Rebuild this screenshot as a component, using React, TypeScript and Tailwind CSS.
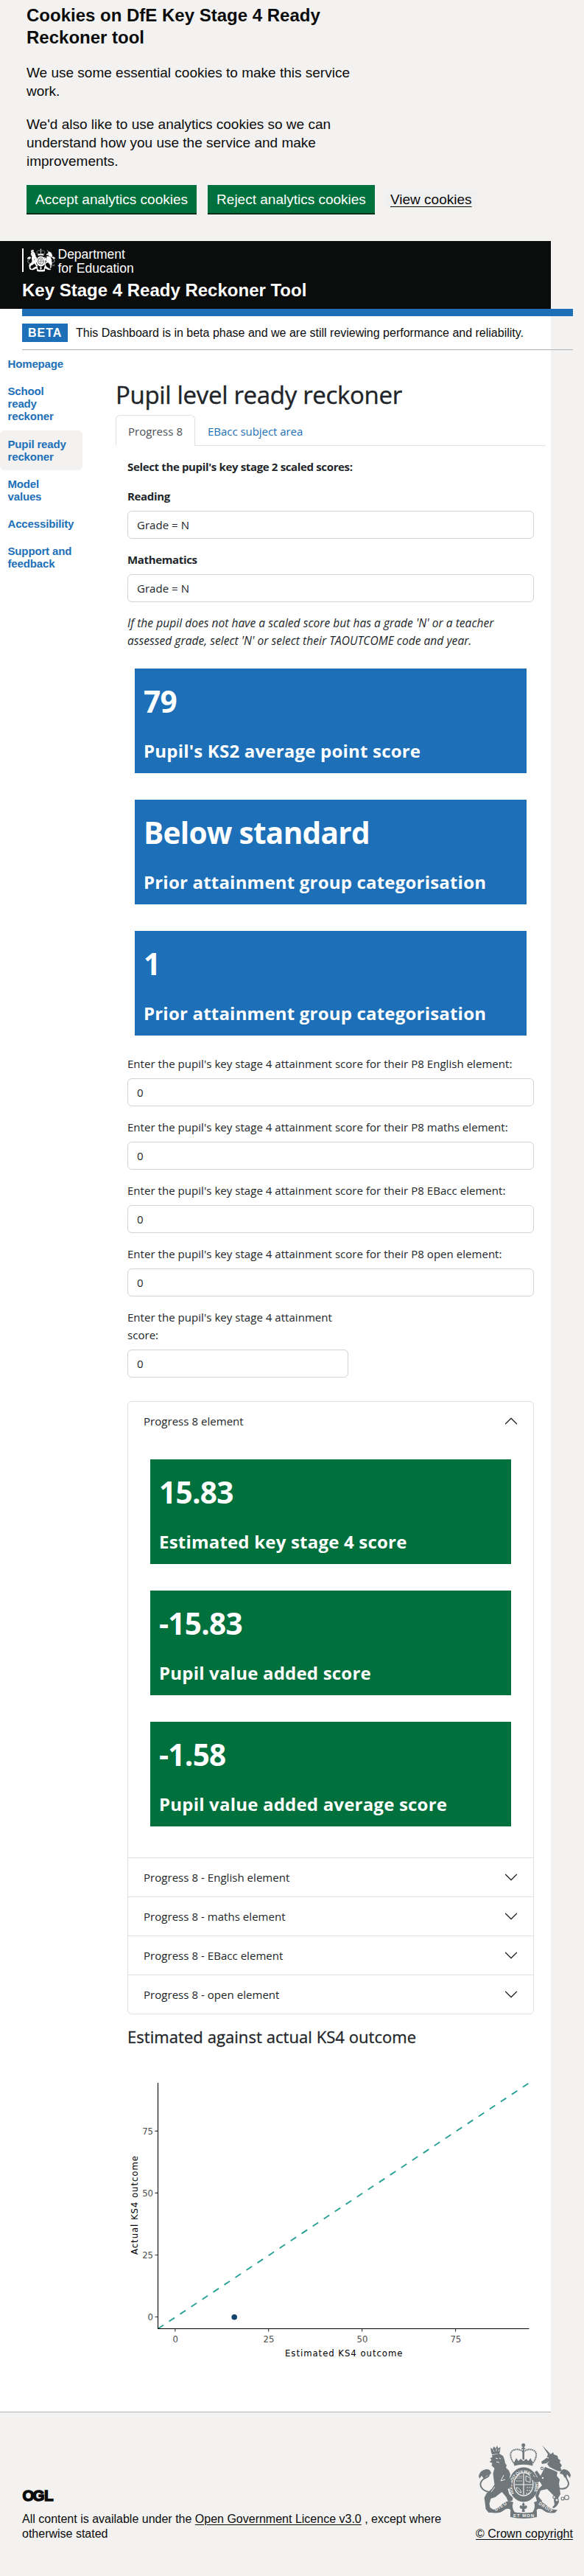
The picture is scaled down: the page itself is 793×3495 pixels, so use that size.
import React from "react";

const SEGOE = "font-['Open_Sans','Noto_Sans',sans-serif]";
const ARIAL = "font-['Liberation_Sans',Arial,sans-serif] tracking-normal";

function Crest({ className, motto = false }: { className: string; motto?: boolean }) {
  const cut = motto ? "#f3f2f1" : "#0b0c0c";
  return (
    <svg viewBox="0 0 125 102" className={className} fill="currentColor" aria-hidden="true">
      {/* crown */}
      <circle cx="60.7" cy="2.6" r="2.5" />
      <path d="M59.7 4h2v6h-2zM58 6.2h5.4v1.6H58z" />
      <path
        d="M48 27C43 21 41.500 13 46 10c5-3 11-2 14.700 2C64.400 8 70.400 7 75.400 10c4.500 3 3 11-2 17"
        fill="none"
        stroke="currentColor"
        strokeWidth="2"
        strokeDasharray="1.800 .7"
      />
      <path d="M60.700 10v12" stroke="currentColor" strokeWidth="2.600" />
      <path d="M48 26l3-6 3 4 3-3 3.700 3 3.700-3 3 3 3-4 3 6v4.500q-12-3.500-25.400 0z" />
      {/* garter and shield */}
      <ellipse cx="61" cy="56" rx="20" ry="23.500" />
      <ellipse cx="61" cy="55.500" rx="13.600" ry="16.300" fill={cut} />
      <ellipse cx="61" cy="55.500" rx="12.300" ry="15" />
      <path d="M61 41v29M49 56h24" stroke={cut} strokeWidth="1.200" />
      <path d="M51 47h8M51 51h8M52 44.500h7M65 60h7M65 64h6M64 68h4" stroke={cut} strokeWidth=".9" strokeDasharray="2 .8" />
      <path d="M64 44l6 3v6l-6-2zM51 60q5 0 7 7l-3-1q-4-2-4-6z" fill="none" stroke={cut} strokeWidth=".9" />
      {motto && (
        <>
          <path id="garter-path" d="M48 68A15.500 18 0 1 1 74 68" fill="none" />
          <text fontSize="5.600" fontWeight="700" fill={cut} fontFamily="Liberation Sans, sans-serif">
            <textPath href="#garter-path" textLength="70">HONI SOIT QUI MAL Y PENSE</textPath>
          </text>
        </>
      )}
      {/* lion */}
      <path d="M17 12l-1-6 3 2 1.500-4 2.500 3 2-4 1.500 4 3-2-.5 6-1 3-10 1z" />
      <path d="M19.500 8.500l1.500 3M24 7v4M28 8l-1 3" stroke={cut} strokeWidth=".8" />
      <path d="M18 16l10-2 5 3 2 5 1 5 2 3-1 3 4 4 2 5-1 4 2 5 .5 8-5 3 2 7 5 5-1 4h-6l-2-5-6-7-4 3-5 4-6 2-2 7 1 5 6 4-1 3h-7l-4-5-1-9-1-6 3-6 7-6 4-6-1-7-1-8 2-7-4-4 1-3-4-2 3-2-2-3 3-1z" />
      <path d="M23 20l3 1M28 20l2 1M24 25l4 1M34 43l-4 8 6-2M22 59l-5 7" stroke={cut} strokeWidth="1" fill="none" />
      <path d="M14 66C4 64 0 57 4 51c3-5 11-4 10-10" fill="none" stroke="currentColor" strokeWidth="2" />
      <path d="M0 44q2-8 11-9 5 0 6 6l-6 3-4 4-3-4-3 4z" />
      {/* unicorn */}
      <path d="M86 2.500L97 14l-2.500 1.500z" />
      <path d="M94 15l5-1 2-2 1 3 5 2 1 4 3 2-1 3 3 4-2 3 2 4-3 1-4-1-10 -5-3-4 3-4-4 3-6 1-1-3 7-5z" />
      <path d="M92 19l3 1M91 33q8 5 16 5" stroke={cut} strokeWidth="1.200" />
      <path d="M90 32l17 7-1 5 4 5-1 6 1 6 1 8-3 5 1 6-3 5-4 3-2-1 3-4-1-6 1-5-6-6-4-4-9 2-3 8 5 6-1 4h-5l-1-4-2-7 4-9 5-5-3-5-6 1-5-4-3-7 3-1 4 6 4-1-4-7 3-2 5 7z" />
      <path d="M108 61c9 2 14-1 14-7 0-4-6-7-3-13" fill="none" stroke="currentColor" strokeWidth="2" />
      <path d="M125 43q-2-7-9-8-5 1-6 6l4 1 3 5 3-5 4 5z" />
      <g fill={cut} stroke="currentColor" strokeWidth="1.100">
        <circle cx="102.500" cy="73" r="1.800" />
        <circle cx="106" cy="77" r="2" />
        <circle cx="114" cy="75" r="2" />
        <circle cx="119.500" cy="73.500" r="3" />
        <circle cx="86" cy="34" r="1.600" />
        <circle cx="87" cy="47" r="1.800" />
      </g>
      {/* ribbon */}
      <path d="M15 90q8 1 14-5 6-6 13-7l5 2q-2 5 0 10l2 4-3 2-4-7q-5-1-8 2-6 5-16 3z" />
      <path d="M107 90q-8 1-14-5-6-6-13-7l-5 2q2 5 0 10l-2 4 3 2 4-7q5-1 8 2 6 5 16 3z" />
      <path d="M43 92q18 5 36 0v8q-18 4-36 0z" />
      <path d="M60.700 80l2 3-1 2q4-2 4 1 0 3-3.500 3l.5 4h-4l.5-4q-3.500 0-3.500-3 0-3 4-1l-1-2z" />
      {motto && (
        <g fill={cut} fontSize="6" fontWeight="700" fontFamily="Liberation Sans, sans-serif">
          <text x="47" y="99.500" textLength="28">ET MON</text>
          <text transform="translate(23 92) rotate(-31)" textLength="18">DIEU</text>
          <text transform="translate(81 82.500) rotate(34)" textLength="21">DROIT</text>
        </g>
      )}
    </svg>
  );
}

function Field({ label, value, bold = false }: { label: string; value: string; bold?: boolean }) {
  return (
    <div className="mb-[15px]">
      <div className={bold ? "h-6 leading-[26px] font-bold tracking-[-0.35px]" : "h-6 leading-[26px]"}>{label}</div>
      <Input value={value} />
    </div>
  );
}

function Input({ value }: { value: string }) {
  return (
    <div className="mt-[9px] h-[38px] rounded-md border border-[#ced4da] bg-white px-3 leading-[37px]">{value}</div>
  );
}

function ValueBox({ value, label, green = false }: { value: string; label: string; green?: boolean }) {
  return (
    <div className={`h-[142px] px-3 pt-[15px] font-bold text-white ${green ? "bg-[#00703c]" : "bg-[#1d70b8]"}`}>
      <div className="h-[60px] text-[40.5px] leading-[60px] tracking-[-0.7px]">{value}</div>
      <div className="mt-[19px] h-9 whitespace-nowrap text-[24px] leading-[36px] tracking-[0.2px]">{label}</div>
    </div>
  );
}

function Chevron({ up = false }: { up?: boolean }) {
  return (
    <svg viewBox="0 0 16 16" className={up ? "h-5 w-5 rotate-180" : "h-5 w-5"} fill="#212529">
      <path
        fillRule="evenodd"
        d="M1.646 4.646a.5.5 0 0 1 .708 0L8 10.293l5.646-5.647a.5.5 0 0 1 .708.708l-6 6a.5.5 0 0 1-.708 0l-6-6a.5.5 0 0 1 0-.708z"
      />
    </svg>
  );
}

function AccordionHeader({ title, open = false }: { title: string; open?: boolean }) {
  return (
    <div>
      <div className="flex h-[52px] items-center justify-between pr-5 pl-[21px]">
        <span>{title}</span>
        <Chevron up={open} />
      </div>
    </div>
  );
}

function Chart() {
  const ticks = [0, 25, 50, 75];
  const x = (v: number) => 64.800 + v * 5.077;
  const y = (v: number) => 343.500 - v * 3.362;
  return (
    <svg width="552" height="440" viewBox="0 0 552 440" className="tracking-normal" fontFamily="DejaVu Sans, sans-serif" fontSize="11.700">
      <line x1="41.500" y1="359.500" x2="545.500" y2="26" stroke="#28a197" strokeWidth="1.900" strokeDasharray="9 9" />
      <path d="M41.500 26v334M41 359.500h504.500" stroke="#000" strokeWidth="1.070" fill="none" />
      {ticks.map((t) => (
        <g key={t}>
          <path d={`M${x(t)} 360v3.500M41 ${y(t)}h-3.500`} stroke="#333" strokeWidth="1.070" />
          <text x={x(t) + 0.3} y="378" textAnchor="middle" fill="#4d4d4d">{t}</text>
          <text x="35" y={y(t) + 4.5} textAnchor="end" fill="#4d4d4d">{t}</text>
        </g>
      ))}
      <circle cx="145.200" cy="343.700" r="3.800" fill="#12436d" />
      <text x="214" y="397" textLength="159.500" fill="#000">Estimated KS4 outcome</text>
      <text transform="translate(13.500 259) rotate(-90)" textLength="134" fill="#000">Actual KS4 outcome</text>
    </svg>
  );
}

const nav = [["Homepage"], ["School", "ready", "reckoner"], ["Pupil ready", "reckoner"], ["Model", "values"], ["Accessibility"], ["Support and", "feedback"]];

export default function App() {
  return (
    <div className={`min-h-[3495px] bg-[#f3f2f1] text-[15px] tracking-[0.04px] text-[#212529] ${SEGOE}`}>
      <section className={`h-[327px] px-9 pt-1.5 text-[19px] leading-[25px] text-[#0b0c0c] ${ARIAL}`}>
        <h2 className="mb-5 w-[480px] text-[24px] leading-[30px] font-bold">Cookies on DfE Key Stage 4 Ready Reckoner tool</h2>
        <p className="mb-5 w-[480px]">We use some essential cookies to make this service work.</p>
        <p className="w-[480px]">We'd also like to use analytics cookies so we can understand how you use the service and make improvements.</p>
        <div className="mt-5 flex items-start gap-[15px] whitespace-nowrap">
          <button className="h-10 w-[231px] border-b-2 border-[#002d18] bg-[#00703c] pt-[1px] leading-[37px] text-white">Accept analytics cookies</button>
          <button className="h-10 w-[227px] border-b-2 border-[#002d18] bg-[#00703c] pt-[1px] leading-[37px] text-white">Reject analytics cookies</button>
          <button className="mt-[9px] h-[21px] bg-[#f0f0f0] px-1.5 leading-[21px] underline underline-offset-[3px]">View cookies</button>
        </div>
      </section>

      <div className="w-[748px] bg-white">
        <header className={`h-[92px] bg-[#0b0c0c] px-[30px] pt-[10px] text-white ${ARIAL}`}>
          <div className="flex h-8 items-start">
            <div className="h-8 w-[2px] bg-white" />
            <Crest className="ml-[5px] h-8 w-[38px]" />
            <div className="-mt-px ml-[3.5px] text-[17.5px] leading-[18.700px]">
              <div>Department</div>
              <div>for Education</div>
            </div>
          </div>
          <div className="mt-[10px] text-[24px] leading-[30px] font-bold">Key Stage 4 Ready Reckoner Tool</div>
        </header>

        <div className={`ml-[30px] h-[56px] w-[748px] border-t-10 border-b border-t-[#1d70b8] border-b-[#b1b4b6] pt-[10px] text-[#0b0c0c] ${ARIAL}`}>
          <div className="flex items-start text-[16px] leading-[25px]">
            <strong className="h-[25px] w-[62px] bg-[#1d70b8] pl-2 tracking-[1px] text-white">BETA</strong>
            <span className="ml-[11px] whitespace-nowrap">This Dashboard is in beta phase and we are still reviewing performance and reliability.</span>
          </div>
        </div>

        <div className="flex h-[2797px]">
          <nav className="w-[112px] font-['Liberation_Sans',Arial,sans-serif] text-[15px] leading-[17.140px] font-bold tracking-[-0.15px] text-[#1d70b8]">
            {nav.map((item, i) => (
              <div key={item[0]} className={i === 2 ? "rounded-md bg-[#f3f2f1] px-[10.500px] py-[10px]" : "px-[10.500px] py-[10px]"}>
                {item.map((line) => (
                  <div key={line}>{line}</div>
                ))}
              </div>
            ))}
          </nav>

          <main className="ml-[45px] w-[584px]">
            <h1 className="h-[88px] pt-[39px] text-[33px] leading-[44px] font-medium tracking-[-0.32px] [-webkit-text-stroke:0.4px_#212529]">Pupil level ready reckoner</h1>
            <div className="flex h-[42px] items-end">
              <div className="h-[42px] w-[108px] rounded-t-md border border-b-0 border-[#dee2e6] text-center leading-[42px] text-[#495057]">Progress 8</div>
              <div className="h-[42px] flex-1 border-b border-[#dee2e6] pl-[17px] leading-[44px] tracking-[-0.04px] text-[#1d70b8]">EBacc subject area</div>
            </div>

            <div className="px-4 pt-[15px]">
              <div className="mb-4 h-6 leading-[26px] font-bold tracking-[-0.35px]">Select the pupil's key stage 2 scaled scores:</div>
              <Field bold label="Reading" value="Grade = N" />
              <Field bold label="Mathematics" value="Grade = N" />
              <p className="h-12 pt-px text-[15.5px] leading-6 tracking-[0.05px] italic">
                If the pupil does not have a scaled score but has a grade 'N' or a teacher
                <br />
                assessed grade, select 'N' or select their TAOUTCOME code and year.
              </p>

              <div className="mx-[10px] mt-[27px] mb-[25px] flex flex-col gap-9">
                <ValueBox value="79" label="Pupil's KS2 average point score" />
                <ValueBox value="Below standard" label="Prior attainment group categorisation" />
                <ValueBox value="1" label="Prior attainment group categorisation" />
              </div>

              <Field label="Enter the pupil's key stage 4 attainment score for their P8 English element:" value="0" />
              <Field label="Enter the pupil's key stage 4 attainment score for their P8 maths element:" value="0" />
              <Field label="Enter the pupil's key stage 4 attainment score for their P8 EBacc element:" value="0" />
              <Field label="Enter the pupil's key stage 4 attainment score for their P8 open element:" value="0" />
              <div className="w-[300px]">
                <div className="h-12 pt-px leading-6">Enter the pupil's key stage 4 attainment<br />score:</div>
                <Input value="0" />
              </div>

              <div className="mt-8 divide-y divide-[#dee2e6] rounded-md border border-[#dee2e6]">
                <div className="h-[619px]">
                  <AccordionHeader open title="Progress 8 element" />
                  <div className="flex flex-col gap-9 px-[30px] pt-[26px]">
                    <ValueBox green value="15.83" label="Estimated key stage 4 score" />
                    <ValueBox green value="-15.83" label="Pupil value added score" />
                    <ValueBox green value="-1.58" label="Pupil value added average score" />
                  </div>
                </div>
                <AccordionHeader title="Progress 8 - English element" />
                <AccordionHeader title="Progress 8 - maths element" />
                <AccordionHeader title="Progress 8 - EBacc element" />
                <AccordionHeader title="Progress 8 - open element" />
              </div>
              <h3 className="h-[67px] pt-[15px] text-[22px] leading-[30px] font-medium tracking-[0.06px] [-webkit-text-stroke:0.3px_#212529]">Estimated against actual KS4 outcome</h3>
              <Chart />
            </div>
          </main>
        </div>
      </div>

      <footer className={`w-[748px] border-t border-[#b1b4b6] text-[16px] leading-[20px] text-[#0b0c0c] ${ARIAL}`}>
        <div className="ml-[30px] flex h-[175px] w-[748px] items-end justify-between">
          <div className="w-[590px]">
            <svg width="41" height="17" viewBox="0 0 41 17" className="mb-[14px] overflow-visible">
              <text x="0.500 14.500 30" y="16" fontSize="20.500" fontWeight="700" fill="#0b0c0c" stroke="#0b0c0c" strokeWidth="1.500" fontFamily="Liberation Sans, sans-serif">OGL</text>
            </svg>
            <p>
              All content is available under the <span className="underline underline-offset-2">Open Government Licence v3.0</span> , except where otherwise stated
            </p>
          </div>
          <div className="flex w-[132px] flex-col items-center whitespace-nowrap">
            <Crest motto className="mb-[11px] h-[102px] w-[125px] text-[#6f777b]" />
            <span className="underline underline-offset-2">© Crown copyright</span>
          </div>
        </div>
      </footer>
    </div>
  );
}
